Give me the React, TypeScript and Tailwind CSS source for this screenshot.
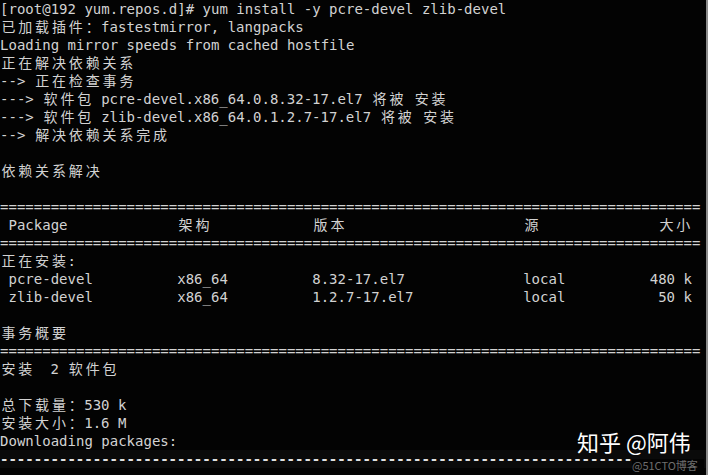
const WIDTH = 83;

const isWide = (ch: string) => /[\u2E80-\u9FFF\u3000-\u303F\uFF00-\uFFEF]/.test(ch);
const cellWidth = (s: string) => [...s].reduce((n, ch) => n + (isWide(ch) ? 2 : 1), 0);

// place pieces of text at fixed terminal columns
const cols = (parts: [string, number][]) =>
  parts.reduce((line, [text, col]) => line + ' '.repeat(Math.max(0, col - cellWidth(line))) + text, '');

const LINES = [
  '[root@192 yum.repos.d]# yum install -y pcre-devel zlib-devel',
  '已加载插件：fastestmirror, langpacks',
  'Loading mirror speeds from cached hostfile',
  '正在解决依赖关系',
  '--> 正在检查事务',
  '---> 软件包 pcre-devel.x86_64.0.8.32-17.el7 将被 安装',
  '---> 软件包 zlib-devel.x86_64.0.1.2.7-17.el7 将被 安装',
  '--> 解决依赖关系完成',
  '',
  '依赖关系解决',
  '',
  '='.repeat(WIDTH),
  cols([['Package', 1], ['架构', 21], ['版本', 37], ['源', 62], ['大小', 78]]),
  '='.repeat(WIDTH),
  '正在安装:',
  cols([['pcre-devel', 1], ['x86_64', 21], ['8.32-17.el7', 37], ['local', 62], ['480 k', 77]]),
  cols([['zlib-devel', 1], ['x86_64', 21], ['1.2.7-17.el7', 37], ['local', 62], ['50 k', 78]]),
  '',
  '事务概要',
  '='.repeat(WIDTH),
  '安装  2 软件包',
  '',
  '总下载量：530 k',
  '安装大小：1.6 M',
  'Downloading packages:',
];

function TermLine({ text }: { text: string }) {
  return (
    <div className="h-[18px] whitespace-pre">
      {[...text].map((ch, i) =>
        isWide(ch) ? (
          <span key={i} className="inline-block w-[2ch] text-center">
            {ch}
          </span>
        ) : (
          ch
        )
      )}
    </div>
  );
}

export default function App() {
  return (
    <div className="relative w-[708px] h-[475px] overflow-hidden bg-[#030303] border-r-2 border-[#8c8c8c]">
      <div className="font-['DejaVu_Sans_Mono','Noto_Sans_CJK_SC',monospace] text-[14px] leading-[18px] text-[#d2d2d2]">
        {LINES.map((line, i) => (
          <TermLine key={i} text={line} />
        ))}
        {/* last rule line */}
        <div className="h-[18px] whitespace-pre bg-[#0a0a0a] font-bold text-[#e0e0e0]">
          {'-'.repeat(WIDTH)}
        </div>
      </div>

      {/* watermarks */}
      <div className="absolute left-[577px] top-[426px] whitespace-nowrap font-['Noto_Sans_CJK_SC',sans-serif] text-[22px] leading-[30px] text-white">
        知乎 @阿伟
      </div>
      <div className="absolute left-[632px] top-[459px] whitespace-nowrap bg-[#030303] pr-[6px] font-['Noto_Sans_CJK_SC',sans-serif] text-[11px] leading-[13px] text-[#6e6e6e]">
        @51CTO博客
      </div>
    </div>
  );
}
